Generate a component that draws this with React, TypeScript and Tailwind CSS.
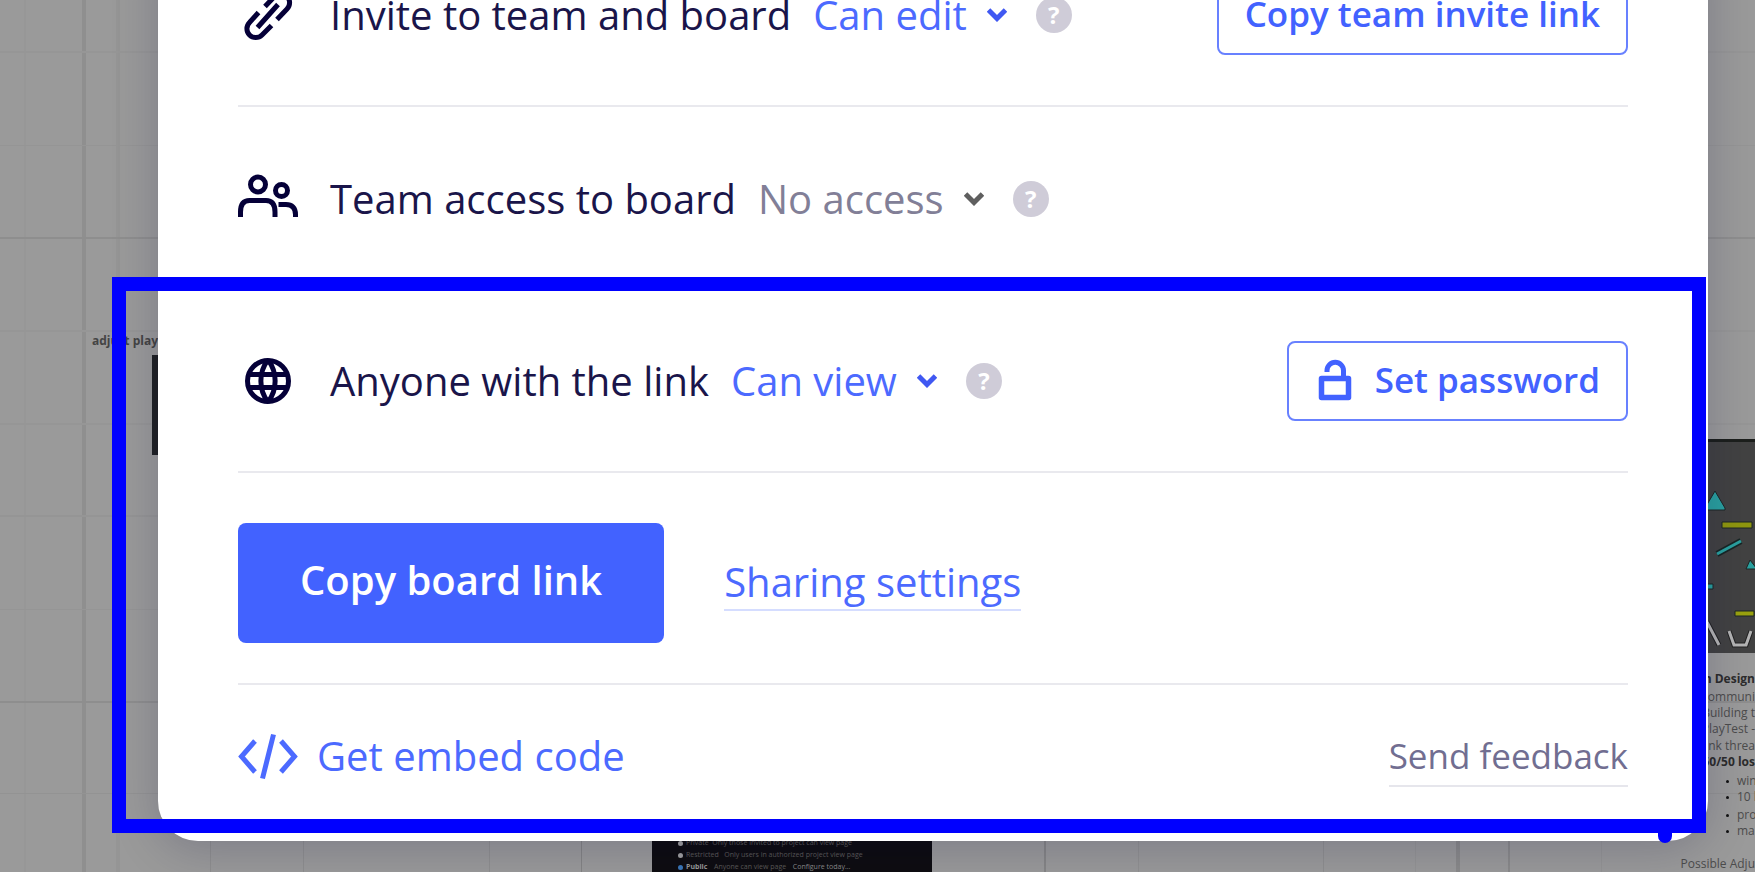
import type { ReactNode } from "react";

const verticalLines = [
  "left-[24px] w-0.5 bg-[#979797]",
  "left-[82px] w-1 bg-[#8f8f8f]",
  "left-[116px] w-1 bg-[#959595]",
  "left-[210px] w-px bg-[#8f8f8f]",
  "left-[303px] w-px bg-[#8f8f8f]",
  "left-[489px] w-px bg-[#8f8f8f]",
  "left-[581px] w-px bg-[#848484]",
  "left-[1044px] w-0.5 bg-[#868686]",
  "left-[1138px] w-px bg-[#919191]",
  "left-[1323px] w-px bg-[#8f8f8f]",
  "left-[1415px] w-px bg-[#949494]",
  "left-[1456px] w-1 bg-[#8a8a8a]",
  "left-[1508px] w-0.5 bg-[#8a8a8a]",
  "left-[1601px] w-px bg-[#949494]",
];

const horizontalLines = [
  "top-[51px] h-0.5 bg-[#969696]",
  "top-[145px] h-px bg-[#959595]",
  "top-[237px] h-0.5 bg-[#8e8e8e]",
  "top-[330px] h-0.5 bg-[#969696]",
  "top-[423px] h-0.5 bg-[#969696]",
  "top-[515px] h-0.5 bg-[#959595]",
  "top-[609px] h-px bg-[#959595]",
  "top-[701px] h-0.5 bg-[#8e8e8e]",
  "top-[793px] h-px bg-[#939393]",
];

const notes = [
  { text: "n Design", place: "right-0 top-[671px] font-bold text-[#2c2c2c]" },
  { text: "Communi", place: "right-0 top-[689px]" },
  { text: "Building t", place: "right-0 top-[705px]" },
  { text: "PlayTest -", place: "right-0 top-[721px]" },
  { text: "ink threa", place: "right-0 top-[738px]" },
  { text: "50/50 los", place: "right-0 top-[754px] font-bold text-[#2c2c2c]" },
];

const bullets = [
  { text: "win", place: "left-[1726px] top-[773px]" },
  { text: "10 l", place: "left-[1726px] top-[789px]" },
  { text: "pro", place: "left-[1726px] top-[807px]" },
  { text: "ma", place: "left-[1726px] top-[823px]" },
];

function Board() {
  return (
    <div aria-hidden="true" className="absolute inset-0 overflow-hidden bg-[#9a9a9a] text-xs leading-4 text-[#4c4c4c]">
      {verticalLines.map((line) => (
        <div key={line} className={`absolute inset-y-0 ${line}`} />
      ))}
      {horizontalLines.map((line) => (
        <div key={line} className={`absolute inset-x-0 ${line}`} />
      ))}
      <div className="absolute left-[92px] top-[333px] text-xs font-bold text-[#444]">adjust play</div>
      <div className="absolute left-[152px] top-[355px] h-[100px] w-40 bg-[#202224]" />
      <div className="absolute left-[652px] top-[820px] h-[80px] w-[280px] bg-[#0e0d10] pl-[26px] pt-[17px] text-[7px] leading-3 text-[#5c5a58]">
        <p className="flex items-center gap-[3px] whitespace-pre">
          <i className="size-[5px] rounded-full bg-[#a0a0a0]" />
          Private  Only those invited to project can view page
        </p>
        <p className="flex items-center gap-[3px] whitespace-pre">
          <i className="size-[5px] rounded-full bg-[#a0a0a0]" />
          Restricted   Only users in authorized project view page
        </p>
        <p className="flex items-center gap-[3px] whitespace-pre">
          <i className="size-[5px] rounded-full bg-[#3a77b8]" />
          <b className="text-[#999]">Public</b>  Anyone can view page  <span className="text-[#8a8a8a]">Configure today...</span>
        </p>
      </div>
      <svg className="absolute right-0 top-[439px]" width="55" height="214" viewBox="1700 439 55 214">
        <path d="M1700 439h55v214h-55z" fill="#424242" />
        <path d="M1700 439h55v3h-55z" fill="#1c1f1c" />
        <g stroke="#1d2625" strokeWidth="1">
          <path d="m1715 491 10 17v2h-20v-2z" fill="#2aa09f" />
          <path d="M1722 522h30v6h-30z" fill="#8f970f" />
          <path d="m1750 560 7 9h-11z" fill="#2aa09f" />
          <path d="M1700 584h13v5h-13z" fill="#2aa09f" />
          <path d="M1735 611h19v5h-19z" fill="#9aa20f" />
        </g>
        <path d="m1717 554 24-13" fill="none" stroke="#182625" strokeWidth="6" />
        <path d="m1717 554 24-13" fill="none" stroke="#2aa09f" strokeWidth="3" />
        <path d="m1707 622 12 23M1729 631l5 14h12l5-14" fill="none" stroke="#222" strokeWidth="5" />
        <path d="m1707 622 12 23M1729 631l5 14h12l5-14" fill="none" stroke="#b4b4b4" strokeWidth="3" />
      </svg>
      {notes.map((note) => (
        <div key={note.text} className={`absolute whitespace-nowrap ${note.place}`}>{note.text}</div>
      ))}
      {bullets.map((note) => (
        <div key={note.text} className={`absolute flex items-center gap-2 whitespace-nowrap ${note.place}`}>
          <i className="size-[3px] rounded-full bg-[#111]" />
          {note.text}
        </div>
      ))}
      <div className="absolute right-0 top-[856px] whitespace-nowrap">Possible Adju</div>
    </div>
  );
}

function LinkIcon() {
  return (
    <svg width="60" height="60" viewBox="0 0 60 60" fill="none" stroke="currentColor" strokeWidth="5" aria-hidden="true">
      <path d="M20.500 27.500 11.500 37.500a8.500 8.500 0 0 0 12.500 12.500l9.500-9.500M39 34.500l10-10.500a8.500 8.500 0 0 0-12.500-12.500l-9.500 10M19.500 42.500l20.500-23" />
    </svg>
  );
}

function TeamIcon() {
  return (
    <svg width="60" height="60" viewBox="0 0 60 60" fill="none" stroke="currentColor" strokeWidth="5" aria-hidden="true">
      <circle cx="20" cy="15.500" r="7.500" />
      <path d="M2.500 48v-5c0-7.500 3-11.500 9-11.500h16.500c6 0 9 4 9 11.500V48" />
      <circle cx="43.500" cy="21.500" r="6" />
      <path d="M40.500 35.500H48c6 0 9.500 3.500 9.500 10V48" />
    </svg>
  );
}

function GlobeIcon() {
  return (
    <svg width="60" height="60" viewBox="0 0 60 60" fill="none" stroke="currentColor" strokeWidth="5" aria-hidden="true">
      <circle cx="30" cy="30" r="20.500" />
      <path d="M10 23.500h40M10 36.500h40" />
      <path d="M30 9c-9.500 12-9.500 30 0 42M30 9c9.500 12 9.500 30 0 42" strokeWidth="5" />
    </svg>
  );
}

function LockIcon() {
  return (
    <svg width="40" height="48" viewBox="0 0 40 48" fill="none" stroke="currentColor" strokeWidth="5.500" aria-hidden="true">
      <path d="M6.500 22.500h27v19h-27z" strokeLinejoin="round" />
      <path d="M12 16v-1.500a8 8 0 0 1 16.500 0V22" strokeWidth="5" />
    </svg>
  );
}

function CodeIcon() {
  return (
    <svg width="60" height="56" viewBox="0 0 60 56" fill="none" stroke="currentColor" strokeWidth="5" aria-hidden="true">
      <path d="M17 13 3.500 28.500 17 44M43 13l13.500 15.500L43 44M35.500 6.500 24.500 50.500" />
    </svg>
  );
}

type AccessRowProps = {
  id: string;
  icon: ReactNode;
  label: string;
  value: string;
  muted?: boolean;
  children?: ReactNode;
};

function AccessRow({ id, icon, label, value, muted = false, children }: AccessRowProps) {
  return (
    <div className="flex items-center justify-between pb-[50px] pt-[52px]">
      <div className="flex h-20 items-center">
        {icon}
        <label htmlFor={id} className="ml-8 text-[40px] leading-[56px] text-[#1a154a]">{label}</label>
        <div className={`ml-[22px] flex items-center gap-5 ${muted ? "text-[#827f97]" : "text-[#4c6aff]"}`}>
          <select id={id} className="appearance-none bg-transparent text-[40px] leading-[56px] [field-sizing:content]">
            <option>{value}</option>
          </select>
          <svg
            className={`pointer-events-none ${muted ? "text-[#5f5f5f]" : "text-[#4058f2]"}`}
            width="20"
            height="14"
            viewBox="0 0 20 14"
            fill="none"
            stroke="currentColor"
            strokeWidth="5"
            aria-hidden="true"
          >
            <path d="m1.500 2 8.500 8.500L18.500 2" />
          </svg>
        </div>
        <button type="button" aria-label={`About: ${label}`} className="ml-[29px] size-9 rounded-full bg-[#cfccd8] text-2xl font-bold leading-9 text-white">
          ?
        </button>
      </div>
      {children}
    </div>
  );
}

const outlineButton =
  "flex h-20 items-center gap-5 rounded-lg border-2 border-[#6881ff] px-[26px] pb-0.5 text-[35px] font-semibold leading-[54px] text-[#4262ff]";

export default function App() {
  return (
    <div className="relative flex h-screen flex-col justify-end overflow-hidden pb-[31px] pl-[158px] pr-[47px] font-['Open_Sans',sans-serif]">
      <Board />
      <main className="relative rounded-[40px] bg-white px-20 text-[#050038] shadow-[0_8px_48px_rgba(5,0,56,0.2)]">
        <AccessRow id="invite" icon={<LinkIcon />} label="Invite to team and board" value="Can edit">
          <button type="button" className={outlineButton}>Copy team invite link</button>
        </AccessRow>
        <hr className="border-t-2 border-[#e9e9ee]" />
        <AccessRow id="team" icon={<TeamIcon />} label="Team access to board" value="No access" muted />
        <AccessRow id="anyone" icon={<GlobeIcon />} label="Anyone with the link" value="Can view">
          <button type="button" className={outlineButton}>
            <LockIcon />
            Set password
          </button>
        </AccessRow>
        <hr className="border-t-2 border-[#e9e9ee]" />
        <div className="flex items-center gap-[60px] pb-10 pt-[50px]">
          <button type="button" className="h-[120px] rounded-lg bg-[#4262ff] px-[62px] pb-1.5 text-[40px] font-semibold leading-[56px] text-white">
            Copy board link
          </button>
          <a href="#settings" className="border-b-2 border-[#d5ddff] text-[40px] leading-[54px] text-[#4c6aff]">
            Sharing settings
          </a>
        </div>
        <hr className="border-t-2 border-[#e9e9ee]" />
        <div className="flex items-start justify-between pb-[54px] pt-[43px]">
          <button type="button" className="flex items-center gap-[19px] text-[40px] leading-[56px] text-[#4c6aff]">
            <CodeIcon />
            Get embed code
          </button>
          <a href="#feedback" className="border-b-2 border-[#e6e6ec] pb-px text-[35px] leading-[56px] text-[#716e91]">
            Send feedback
          </a>
        </div>
        <div className="pointer-events-none absolute -left-[46px] bottom-2 right-[2px] h-[556px] border-[14px] border-[#0000ff]">
          <div className="absolute -bottom-6 right-5 h-2.5 w-3.5 rounded-b-full bg-[#0000ff]" />
        </div>
      </main>
    </div>
  );
}
